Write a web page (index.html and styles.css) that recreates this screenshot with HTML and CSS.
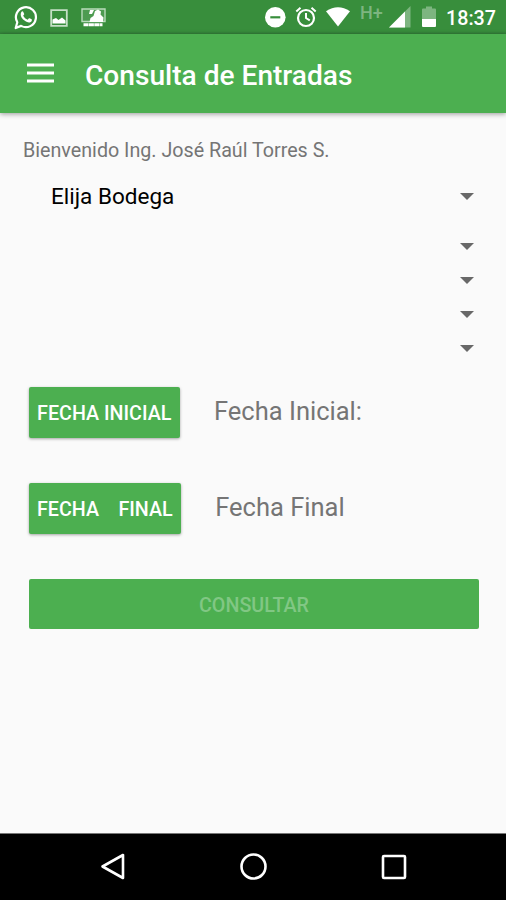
FILE: index.html
```html
<!DOCTYPE html>
<html lang="es">
<head>
<meta charset="utf-8">
<title>Consulta de Entradas</title>
<link rel="stylesheet" href="styles.css">
</head>
<body>
<div class="screen">
  <div class="status">
    <div class="notifications">
      <svg class="whatsapp" width="24" height="26" viewBox="0 0 24 26"><path d="M1.700 24 3.300 18.200A10 10 0 1 1 7.100 21.900Z" fill="none" stroke="#fff" stroke-width="2.200" stroke-linejoin="round"/><path d="M7.100 8.400c.7-1.400 1.900-1.200 2.200-.5l.9 2.200c.1.5-.6 1.200-1 1.600 1.100 2 2.400 3.100 4.500 4l1.200-1.400c.4-.3.8-.2 2.700.9.8.5.1 2.500-1.300 3-1.700.7-4.300-.3-6.400-2.100C7.700 14.200 6 11.400 7.100 8.400Z" fill="#fff"/></svg>
      <svg class="image" width="18" height="18" viewBox="0 0 18 18"><path d="M1.200 1.200H16.800V16.800H1.200Z" fill="none" stroke="#c5e0c6" stroke-width="1.800"/><path d="M2.500 14.500V10.500l3.500-1.500 2.500 2L12 8.500l3.500 3V14.500Z" fill="#fff"/></svg>
      <svg class="league" width="25" height="20" viewBox="0 0 25 20"><path d="M1 1H24V13.500H1Z" fill="#4d9b51" stroke="#b9dbbb" stroke-width="1.400"/><path d="M8.500 14 9.500 10 12.500 8 14 3l3-1.500 3 2-.5 3 3 3-.5 4.500Z" fill="#fff"/><path d="M9 2h4l-2 4H8Z" fill="#fff"/><path d="M2.500 16.800H21.500" stroke="#fff" stroke-width="3" stroke-dasharray="5 .4"/></svg>
    </div>
    <div class="system">
      <svg class="dnd" width="22" height="22" viewBox="0 0 22 22"><circle cx="11.300" cy="11.300" r="10.300" fill="#fff"/><path d="M6.300 11.300H16.300" stroke="#388e3c" stroke-width="2.200"/></svg>
      <svg class="alarm" width="22" height="22" viewBox="0 0 22 22"><circle cx="11" cy="12" r="8" fill="none" stroke="#fff" stroke-width="2.200"/><path d="M11 7V12l3.800 2.300M1.300 5.500 5.500 1.800M16.500 1.800l4.200 3.700" fill="none" stroke="#fff" stroke-width="2"/></svg>
      <svg class="wifi" width="26" height="20" viewBox="0 0 26 20"><path d="M1 4.300Q13-4 25 4.300L13 19.500Z" fill="#fff"/></svg>
      <span class="network">H+</span>
      <svg class="signal" width="22" height="22" viewBox="0 0 22 22"><path d="M0 21.500 21.500 0V21.500Z" fill="#7db580"/><path d="M0 21.500 16 5.500v16Z" fill="#fff"/></svg>
      <svg class="battery" width="14" height="22" viewBox="0 0 14 22"><path d="M0 3.500Q0 2.500 1 2.500H4V.5h6v2h3q1 0 1 1V13H0Z" fill="#7db580"/><path d="M0 13H14v7q0 1-1 1H1q-1 0-1-1Z" fill="#fff"/></svg>
      <time class="clock">18:37</time>
    </div>
  </div>
  <header class="toolbar">
    <svg class="menu" width="27" height="20" viewBox="0 0 27 20"><path d="M0 2H27M0 10H27M0 18H27" stroke="#fff" stroke-width="2.800"/></svg>
    <h1 class="title">Consulta de Entradas</h1>
  </header>
  <main class="content">
    <p class="welcome">Bienvenido Ing. José Raúl Torres S.</p>
    <div class="spinner first"><span>Elija Bodega</span><i class="caret"></i></div>
    <div class="spinner"><i class="caret"></i></div>
    <div class="spinner"><i class="caret"></i></div>
    <div class="spinner"><i class="caret"></i></div>
    <div class="spinner"><i class="caret"></i></div>
    <div class="row"><button class="button initial">FECHA INICIAL</button><span class="date">Fecha Inicial:</span></div>
    <div class="row"><button class="button final"><span>FECHA</span><span>FINAL</span></button><span class="date">Fecha Final</span></div>
    <button class="button submit" disabled>CONSULTAR</button>
  </main>
  <nav class="navbar">
    <svg width="26" height="30" viewBox="0 0 26 30"><path d="M2.500 14.500 23 3v23Z" fill="none" stroke="#fff" stroke-width="2.600" stroke-linejoin="round"/></svg>
    <svg width="28" height="28" viewBox="0 0 28 28"><circle cx="13.500" cy="13.500" r="12" fill="none" stroke="#fff" stroke-width="2.600"/></svg>
    <svg width="26" height="26" viewBox="0 0 26 26"><rect x="2" y="2" width="22" height="22" rx="1" fill="none" stroke="#fff" stroke-width="2.600"/></svg>
  </nav>
</div>
</body>
</html>
```
FILE: styles.css
```css
* { box-sizing: border-box; }
body { margin: 0; font-family: Roboto, "Liberation Sans", sans-serif; }
svg { display: block; flex: none; }
.screen { width: 506px; height: 900px; display: flex; flex-direction: column; background: #fafafa; overflow: hidden; }
.status { height: 34px; flex: none; background: linear-gradient(#388e3c 31px, #33803a); display: flex; justify-content: space-between; color: #fff; }
.notifications { display: flex; padding-left: 14px; }
.whatsapp { margin-top: 4px; }
.image { margin: 9px 0 0 12px; }
.league { margin: 8px 0 0 13px; }
.system { display: flex; padding-right: 10px; }
.dnd { margin-top: 6px; }
.alarm { margin: 6px 0 0 9px; }
.wifi { margin: 7px 0 0 8px; }
.network { width: 24px; margin: 4px 0 0 9px; font-size: 18px; line-height: 18px; font-weight: 500; color: #7db580; white-space: nowrap; }
.signal { margin: 6px 0 0 5px; }
.battery { margin: 6px 0 0 11px; }
.clock { width: 50px; margin: 7px 0 0 10px; font-size: 19.7px; line-height: 24px; font-weight: 500; }
.toolbar { height: 79px; flex: none; display: flex; align-items: center; padding-left: 26.5px; background: #4caf50; color: #fff; box-shadow: 0 1px 5px rgba(0,0,0,.4); }
.menu { margin-top: -2px; }
.title { margin: 4px 0 0 31.5px; font-size: 28.1px; line-height: 34px; font-weight: 500; white-space: nowrap; }
.content { flex: 1; padding: 25px 27.5px 0 28.5px; display: flex; flex-direction: column; }
.welcome { margin: 0 0 0 -5.5px; font-size: 19.7px; line-height: 26px; color: #757575; white-space: nowrap; }
.spinner { height: 33.8px; flex: none; display: flex; align-items: center; justify-content: flex-end; padding-right: 4.5px; }
.spinner.first { height: 50px; margin: 7px 0 9px; justify-content: space-between; padding-left: 22.5px; font-size: 22.5px; color: #000; }
.caret { border: solid transparent; border-width: 7px 7px 0; border-top-color: #686868; }
.row { display: flex; align-items: center; height: 51px; flex: none; margin-top: 45px; }
.spinner + .row { margin-top: 22px; }
.button { height: 51px; border: 0; border-radius: 2px; padding: 2px 0 0; background: #4caf50; color: #fff; font-family: inherit; font-size: 19.7px; font-weight: 500; box-shadow: 0 1px 3px rgba(0,0,0,.35); white-space: nowrap; }
.initial { width: 151.5px; }
.final { width: 152.7px; display: flex; justify-content: space-between; align-items: center; padding: 2px 8.5px 0; }
.date { margin-left: 34px; margin-top: -4px; font-size: 25.5px; color: #757575; white-space: nowrap; }
.submit { height: 50px; margin-top: 45px; padding-left: 1px; color: #81c784; box-shadow: none; flex: none; }
.navbar { height: 67px; flex: none; border-top: 1px solid #777; background: #000; display: flex; align-items: center; justify-content: space-between; padding: 0 99px 0 100px; }
```
